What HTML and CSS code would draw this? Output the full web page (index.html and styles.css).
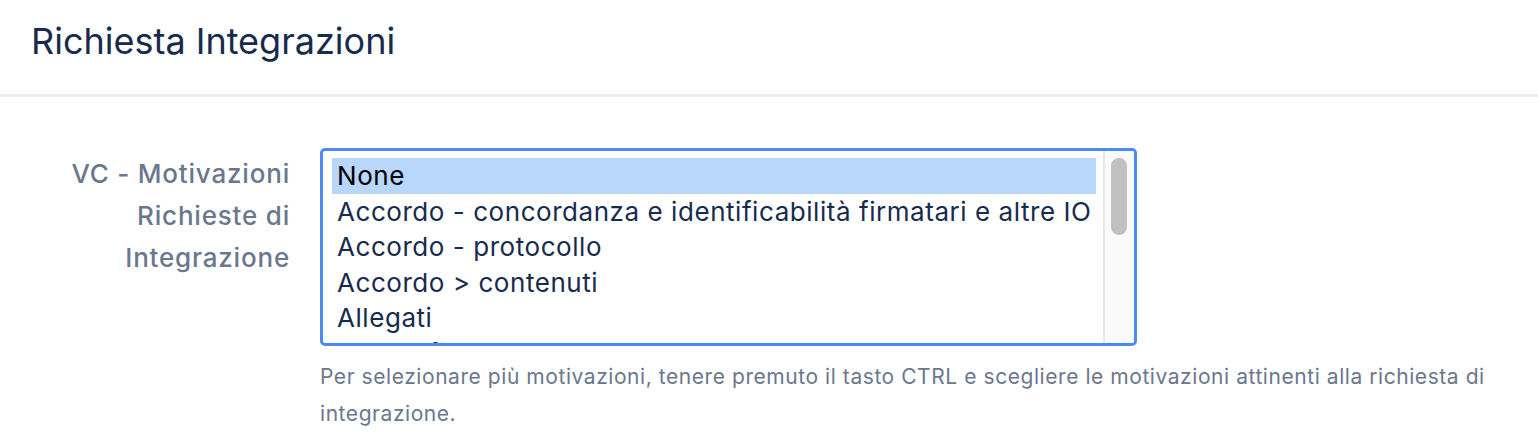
FILE: index.html
```html
<!DOCTYPE html>
<html lang="it">
<head>
<meta charset="utf-8">
<link rel="stylesheet" href="styles.css">
</head>
<body>
<header class="page-header">
  <h1 class="title">Richiesta Integrazioni</h1>
</header>
<main class="form">
  <div class="field">
    <label class="field-label">VC - Motivazioni Richieste di Integrazione</label>
    <div class="field-control">
      <div class="listbox">
        <ul class="options">
          <li class="option selected">None</li>
          <li class="option">Accordo - concordanza e identificabilità firmatari e altre IO</li>
          <li class="option">Accordo - protocollo</li>
          <li class="option">Accordo &gt; contenuti</li>
          <li class="option">Allegati</li>
          <li class="option">Anagrafica</li>
        </ul>
        <div class="scrollbar"><div class="thumb"></div></div>
      </div>
      <p class="help">Per selezionare più motivazioni, tenere premuto il tasto CTRL e scegliere le motivazioni attinenti alla richiesta di integrazione.</p>
    </div>
  </div>
</main>
</body>
</html>
```

FILE: styles.css
```css
* { box-sizing: border-box; }
html, body { margin: 0; padding: 0; background: #fff; }
body { font-family: Inter, "Noto Sans", sans-serif; color: #172b4d; width: 1538px; height: 442px; overflow: hidden; }

.page-header {
  height: 97px;
  border-bottom: 3px solid #ebecf0;
  padding: 17px 31px 0;
}
.title {
  margin: 0;
  font-size: 36px;
  font-weight: 400;
  line-height: 48px;
  color: #172b4d;
}

.form { padding-top: 51px; }
.field { display: flex; gap: 30px; }
.field-label {
  width: 290px;
  flex: none;
  text-align: right;
  font-size: 26px;
  font-weight: 500;
  line-height: 42px;
  letter-spacing: 0.8px;
  color: #6b778c;
  padding-top: 5px;
  padding-left: 50px;
}
.field-control { flex: 1; }

.listbox {
  width: 817px;
  height: 198px;
  border: 3px solid #4c8bf5;
  border-radius: 5px;
  display: flex;
  overflow: hidden;
  background: #fff;
}
.options {
  list-style: none;
  margin: 0;
  padding: 7px 7px 0 9px;
  flex: 1;
  overflow: hidden;
}
.option {
  font-size: 26px;
  line-height: 35.5px;
  height: 35.5px;
  padding-left: 5px;
  letter-spacing: 0.55px;
  white-space: nowrap;
  color: #172b4d;
}
.option.selected { background: #b9d6fb; color: #000; }

.scrollbar {
  width: 31px;
  flex: none;
  background: #fafafa;
  border-left: 2px solid #e8e8e8;
  padding: 7px 0 0 6px;
}
.thumb {
  width: 16px;
  height: 77px;
  border-radius: 8px;
  background: #c1c1c1;
}

.help {
  margin: 12px 0 0;
  font-size: 21px;
  line-height: 37px;
  letter-spacing: 0.56px;
  color: #6b778c;
  max-width: 1190px;
}
```
